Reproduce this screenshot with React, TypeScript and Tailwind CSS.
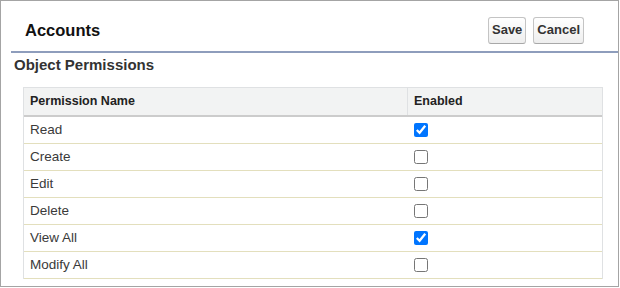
import { useState } from 'react';

const rows = [
  { name: 'Read', enabled: true },
  { name: 'Create', enabled: false },
  { name: 'Edit', enabled: false },
  { name: 'Delete', enabled: false },
  { name: 'View All', enabled: true },
  { name: 'Modify All', enabled: false },
];

export default function App() {
  const [perms, setPerms] = useState(rows);

  const toggle = (i: number) =>
    setPerms((prev) => prev.map((p, j) => (j === i ? { ...p, enabled: !p.enabled } : p)));

  return (
    <div
      className="w-[619px] h-[287px] border border-[#a4a4a4] bg-white text-[#333]"
      style={{ fontFamily: '"Liberation Sans", Arial, sans-serif' }}
    >
      {/* page header */}
      <div className="ml-[10px] h-[52px] pt-[8px] pl-[14px] pr-[34px] flex items-center justify-between border-b-2 border-[#8e9dbc]">
        <h2 className="text-[16.5px] font-bold text-[#111]">Accounts</h2>
        <div className="flex gap-[7px]">
          <button className="h-[27px] px-[3px] rounded-[3px] border border-[#c4c4c4] border-b-[#a8a8a8] bg-gradient-to-b from-white to-[#eeeeee] text-[13px] font-bold text-[#333]">
            Save
          </button>
          <button className="h-[27px] px-[3px] rounded-[3px] border border-[#c4c4c4] border-b-[#a8a8a8] bg-gradient-to-b from-white to-[#eeeeee] text-[13px] font-bold text-[#333]">
            Cancel
          </button>
        </div>
      </div>

      <h3 className="mt-[3px] pl-[13px] text-[15px] leading-[17px] font-bold text-[#333]">Object Permissions</h3>

      {/* permissions table */}
      <div className="ml-[22px] mt-[14px] w-[580px] border-x border-t border-[#dfe1e3]">
        <div className="flex h-[29px] bg-[#f2f3f3] border-b-2 border-[#cccccc] text-[12.5px] font-bold text-[#222]">
          <div className="w-[384px] pl-[6px] flex items-center border-r border-[#dfe1e3]">Permission Name</div>
          <div className="flex-1 pl-[6px] flex items-center">Enabled</div>
        </div>
        {perms.map((p, i) => (
          <div key={p.name} className="flex h-[27px] border-b border-[#e3dfbd] text-[13.5px] text-[#3a3a3a]">
            <div className="w-[385px] pl-[6px] flex items-center">{p.name}</div>
            <div className="flex-1 pl-[5px] flex items-center">
              <input
                type="checkbox"
                checked={p.enabled}
                onChange={() => toggle(i)}
                className="m-0 w-[14px] h-[14px]"
              />
            </div>
          </div>
        ))}
      </div>
    </div>
  );
}
